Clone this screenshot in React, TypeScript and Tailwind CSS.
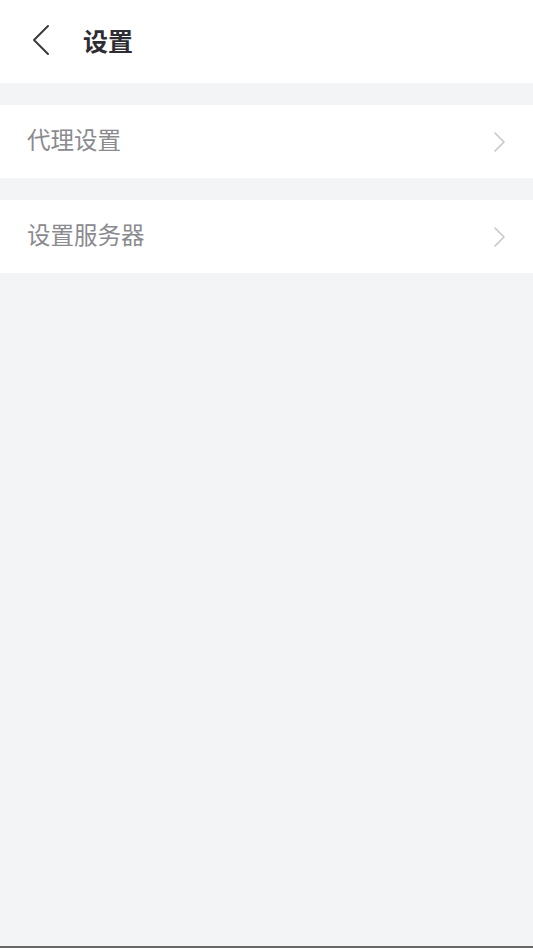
const font = { fontFamily: '"Noto Sans CJK SC", "Noto Sans", sans-serif' };

function SettingRow({ label }: { label: string }) {
  return (
    <button
      type="button"
      className="flex h-[73px] w-full items-center justify-between bg-white pl-[27px] pr-[26px]"
    >
      <span className="pb-[3px] text-[23.5px] leading-none text-[#8a8a8f]">{label}</span>
      <svg width="14" height="22" viewBox="0 0 14 22" fill="none">
        <path d="M2 2l9 9-9 9" stroke="#c7c7cc" strokeWidth="1.6" strokeLinecap="round" strokeLinejoin="round" />
      </svg>
    </button>
  );
}

export default function App() {
  return (
    <div className="flex h-[948px] w-full flex-col bg-[#f3f4f6]" style={font}>
      <header className="flex h-[83px] items-center bg-white pb-[3px] pl-[32px]">
        <svg width="20" height="32" viewBox="0 0 20 32" fill="none">
          <path d="M16 2L2 16l14 14" stroke="#3a3a40" strokeWidth="2" strokeLinecap="round" strokeLinejoin="round" />
        </svg>
        <h1 className="ml-[31px] text-[25px] font-bold leading-none text-[#2d2d33]">设置</h1>
      </header>

      <div className="mt-[22px]">
        <SettingRow label="代理设置" />
      </div>
      <div className="mt-[22px]">
        <SettingRow label="设置服务器" />
      </div>

      <div className="flex-1" />
      <div className="h-[2px] bg-[#666666]" />
    </div>
  );
}
